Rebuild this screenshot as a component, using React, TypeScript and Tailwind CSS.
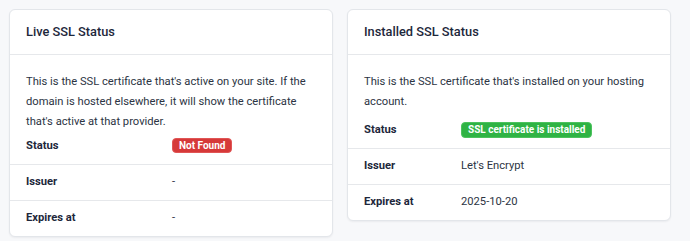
import React from "react";

type Row = { label: string; value: React.ReactNode };

function Card({
  title,
  desc,
  rows,
  labelCol,
  descMb,
}: {
  title: string;
  desc: string;
  rows: Row[];
  labelCol: string;
  descMb: string;
}) {
  return (
    <div className="w-[324px] bg-white border border-[#e3e6ea] rounded-[6px] shadow-[0_1px_2px_rgba(30,41,59,0.06)] overflow-hidden">
      <div className="h-[45px] flex items-center px-4 border-b border-[#e6e8eb]">
        <h3 className="text-[12.8px] font-medium text-[#1d273b]">{title}</h3>
      </div>
      <p className={`pt-[17px] px-4 text-[11.2px] leading-[20px] text-[#2c3443] ${descMb}`}>{desc}</p>
      <div>
        {rows.map((r, i) => {
          const last = i === rows.length - 1;
          return (
            <div
              key={r.label}
              className={`grid ${labelCol} items-center ${
                last ? "h-[35px]" : "h-[36px] border-b border-[#e6e8eb]"
              }`}
            >
              <div className="pl-4 text-[11.2px] font-bold text-[#1d273b]">{r.label}</div>
              <div className="text-[11.2px] text-[#2c3443]">{r.value}</div>
            </div>
          );
        })}
      </div>
    </div>
  );
}

export default function App() {
  return (
    <div
      className="w-[690px] h-[241px] bg-[#f7f8fa] flex items-start gap-[14px] pl-[9px] pt-[9px]"
      style={{ fontFamily: "Roboto, 'Noto Sans', sans-serif" }}
    >
      <Card
        title="Live SSL Status"
        desc="This is the SSL certificate that's active on your site. If the domain is hosted elsewhere, it will show the certificate that's active at that provider."
        labelCol="grid-cols-[162px_1fr]"
        descMb="mb-[-3px]"
        rows={[
          {
            label: "Status",
            value: (
              <span className="inline-flex items-center h-[15px] px-[6px] rounded-[4px] bg-[#d63939] text-white text-[10px] font-bold border border-[#e05555]">
                Not Found
              </span>
            ),
          },
          { label: "Issuer", value: "-" },
          { label: "Expires at", value: "-" },
        ]}
      />
      <Card
        title="Installed SSL Status"
        desc="This is the SSL certificate that's installed on your hosting account."
        labelCol="grid-cols-[113px_1fr]"
        descMb="mb-[1px]"
        rows={[
          {
            label: "Status",
            value: (
              <span className="inline-flex items-center h-[16px] px-[6px] rounded-[4px] bg-[#2fb344] text-white text-[10px] font-bold border border-[#4cc25e]">
                SSL certificate is installed
              </span>
            ),
          },
          { label: "Issuer", value: "Let's Encrypt" },
          { label: "Expires at", value: "2025-10-20" },
        ]}
      />
    </div>
  );
}
